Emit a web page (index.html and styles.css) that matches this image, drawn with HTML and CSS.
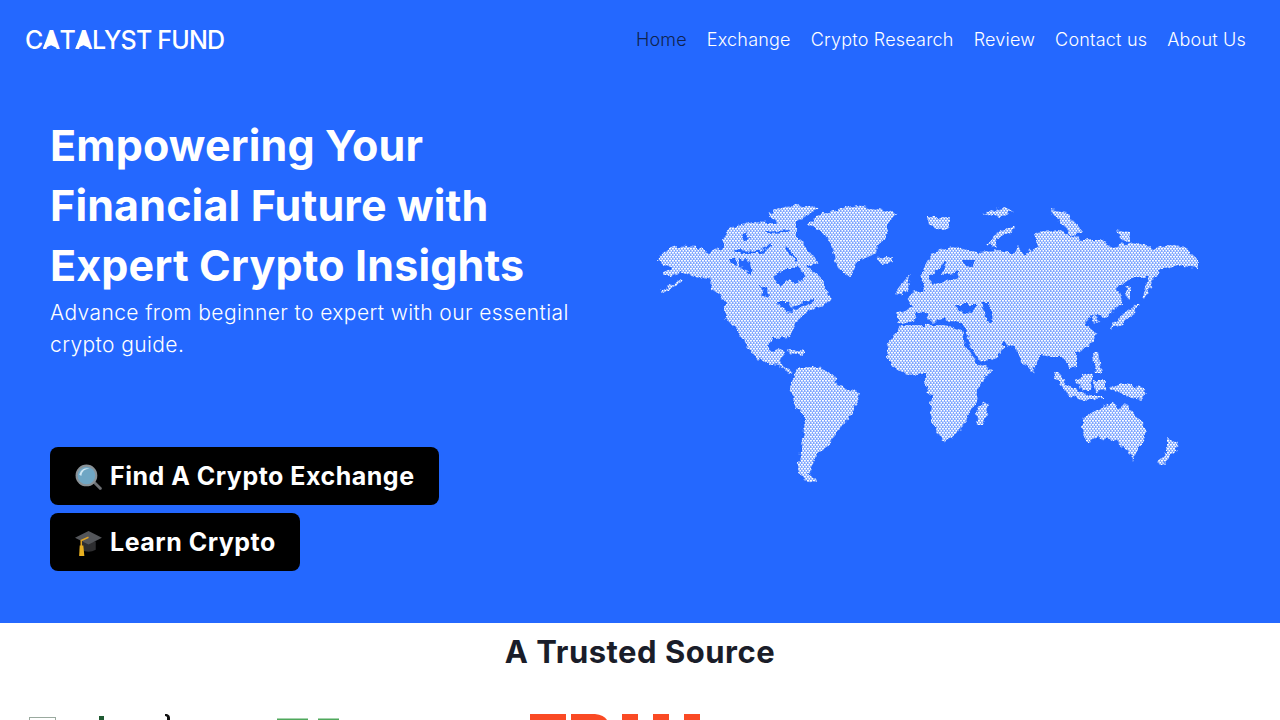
FILE: index.html
```html
<!DOCTYPE html>
<html lang="en">
<head>
    <meta charset="UTF-8">
    <title>Catalyst Fund</title>
    <link rel="stylesheet" href="styles.css">
</head>
<body>
<div class="hero">
    <div class="nav">
        <a href="#" class="logo">C<span class="tri">A</span>T<span class="tri">A</span>LYST FUND</a>
        <ul class="menu">
            <li><a href="#" class="active">Home</a></li>
            <li><a href="#">Exchange</a></li>
            <li><a href="#">Crypto Research</a></li>
            <li><a href="#">Review</a></li>
            <li><a href="#">Contact us</a></li>
            <li><a href="#">About Us</a></li>
        </ul>
    </div>
    <div class="hero-body">
        <div class="hero-left">
            <h1>Empowering Your<br>Financial Future with<br>Expert Crypto Insights</h1>
            <p>Advance from beginner to expert with our essential crypto guide.</p>
            <div class="btns">
                <a href="#" class="btn">
                    <svg class="emoji" viewBox="0 0 28 28">
                        <path d="M18 20l2-2 7 7q0 2-2 2z" fill="#6d6f73"/>
                        <circle cx="12" cy="13" r="10.500" fill="#8a9297"/>
                        <circle cx="12" cy="13" r="8.500" fill="#6fa6c4"/>
                        <path d="M5 12a7.500 7.500 0 0 1 10-5.500q-7 0-8 7z" fill="#cfe6f2"/>
                    </svg>
                    Find A Crypto Exchange
                </a>
                <a href="#" class="btn">
                    <svg class="emoji" viewBox="0 0 28 28">
                        <path d="M7 13v8q7 4 14 0v-8z" fill="#2e2e30"/>
                        <path d="M14 3L27 9.500 14 16 1 9.500z" fill="#54565a"/>
                        <path d="M14 9L7 12v7" fill="none" stroke="#e0a526" stroke-width="1.500"/>
                        <path d="M5.500 17h3.500l1 10H5z" fill="#e8b020"/>
                    </svg>
                    Learn Crypto
                </a>
            </div>
        </div>
        <div class="hero-right">
            <svg class="map" viewBox="640 190 570 300">
                <defs>
                    <pattern id="dots" width="3" height="4" patternUnits="userSpaceOnUse">
                        <rect width="3" height="4" fill="#7ea6ff"/>
                        <rect x="0" y="0" width="1.900" height="1.500" fill="#fff"/>
                        <rect x="1.500" y="2" width="1.900" height="1.500" fill="#fff"/>
                    </pattern>
                    <!-- roughens the coastlines so they break up like the dots do -->
                    <filter id="rough" x="-5%" y="-5%" width="110%" height="110%">
                        <feTurbulence type="fractalNoise" baseFrequency="0.16" numOctaves="2" seed="4"/>
                        <feDisplacementMap in="SourceGraphic" scale="7" xChannelSelector="R" yChannelSelector="G"/>
                    </filter>
                    <mask id="land" maskUnits="userSpaceOnUse" x="640" y="190" width="570" height="300">
                        <g fill="#fff" fill-rule="evenodd" filter="url(#rough)">
                            <!-- north america -->
                            <path d="M662 276L672 268 658 262 663 252 677 246 698 248 708 252 723 248 723 240 730 228 753 222 767 223 777 223 768 213 793 205 818 207 807 216 797 222 797 237 803 243 818 263 807 268 813 272 817 273 825 287 832 300 827 303 807 312 795 323 790 337 773 338 767 347 773 352 778 348 787 352 783 358 780 363 792 372 798 367 790 374 780 366 772 365 757 358 747 347 737 330 725 318 725 303 718 293 712 290 710 280 700 277 690 275 680 272 670 276z
                            M773 277L787 268 800 268 806 277 796 283 788 280 780 287z
                            M760 287L767 288 768 297 763 295z
                            M777 302L790 302 793 313 785 312 782 307z
                            M792 307L813 299 813 302 795 311z
                            M728 258L736 258 737 265 731 263z
                            M740 258L750 262 753 277 745 270 740 268z
                            M733 250L760 251 772 243 772 245 762 253 735 253z
                            M745 232L750 238 747 241 742 238z
                            M765 232L790 230 788 233 768 234z
                            M787 246L797 258 795 260 785 249z"/>
                            <path d="M660 291L680 279 684 281 662 293z"/>
                            <path d="M787 349L804 352 804 355 790 353z"/>
                            <path d="M807 225L817 215 857 205 873 208 897 213 887 223 888 233 877 247 875 253 857 263 850 277 840 270 835 260 832 245 820 230z"/>
                            <path d="M878 258L893 256 893 262 882 266z"/>
                            <!-- arctic islands -->
                            <path d="M927 217L950 217 948 228 940 230 928 225z"/>
                            <path d="M983 213L1003 208 1013 211 1000 218z"/>
                            <path d="M987 245L997 232 1015 227 1015 230 1000 237 995 247z"/>
                            <path d="M1050 210L1067 213 1083 232 1073 235 1060 223z"/>
                            <path d="M1115 230L1130 233 1128 243 1122 238z"/>
                            <!-- europe and asia -->
                            <path d="M920 275L933 252 953 247 977 252 997 250 1012 254 1018 246 1025 256 1030 250 1037 247 1035 233 1060 230 1083 240 1100 240 1113 247 1133 242 1153 248 1183 245 1198 260 1198 268 1177 265 1160 270 1152 282 1145 300 1143 298 1146 282 1150 277 1133 277 1117 287 1123 303 1113 310 1107 318 1090 313 1085 327 1097 333 1092 343 1077 353 1077 367 1070 368 1062 357 1052 357 1040 355 1033 373 1023 363 1015 347 1003 342 1003 348 997 358 982 362 972 350 967 335 963 323 950 322 943 318 933 323 928 318 927 312 917 313 913 323 898 322 898 312 913 307 907 297 913 293 925 290z
                            M928 278L945 262 947 262 942 275 960 272 958 277 935 285z
                            M963 260L975 260 972 266 965 265z
                            M955 305L977 305 972 313 958 311z
                            M982 303L990 303 993 322 987 320z
                            M1090 316L1096 315 1100 322 1094 324z"/>
                            <path d="M895 292L905 280 910 274 908 288 903 296z"/>
                            <path d="M1125 285L1130 287 1130 301 1127 300z"/>
                            <path d="M1113 323L1138 303 1140 305 1122 325 1110 330z"/>
                            <!-- africa -->
                            <path d="M887 357L888 343 897 332 900 325 943 325 952 327 962 330 965 345 978 365 992 370 983 380 978 390 977 402 967 417 962 430 943 442 937 433 930 413 932 397 925 387 925 373 907 375 895 368z"/>
                            <path d="M983 402L989 405 983 425 977 425 975 415z"/>
                            <!-- south america -->
                            <path d="M790 387L798 367 817 367 833 375 838 385 860 393 852 415 840 428 828 447 817 453 808 473 817 482 803 480 798 470 803 440 805 417 795 405z"/>
                            <!-- oceania and islands -->
                            <path d="M1083 418L1100 408 1113 403 1120 408 1125 403 1132 410 1145 427 1145 437 1133 460 1130 452 1117 442 1100 437 1085 443 1083 430z"/>
                            <path d="M1158 463L1167 452 1167 438 1178 443 1175 452 1162 465z"/>
                            <path d="M1075 380L1092 372 1090 390 1082 390z"/>
                            <path d="M1053 373L1058 373 1072 388 1090 396 1103 396 1103 398 1083 401 1067 394z"/>
                            <path d="M1093 380L1105 380 1105 390 1095 392z"/>
                            <path d="M1110 387L1120 383 1143 388 1147 393 1140 400 1123 395z"/>
                            <path d="M1093 353L1098 353 1102 373 1095 373z"/>
                        </g>
                    </mask>
                </defs>
                <rect x="640" y="190" width="570" height="300" fill="url(#dots)" mask="url(#land)"/>
            </svg>
        </div>
    </div>
</div>
<div class="trusted">
    <h2>A Trusted Source</h2>
    <div class="logos">
        <svg class="logo-a" viewBox="0 0 141 6">
            <rect x="0.500" y="3.500" width="26" height="10" fill="#fff" stroke="#9aaa9f"/>
            <rect x="70" y="2" width="5" height="6" fill="#1f5a32"/>
            <path d="M136 0h2q3 1 3 4v2h-3V3q-1-1-2-1z" fill="#111"/>
        </svg>
        <svg class="logo-b" viewBox="0 0 62 6">
            <rect x="0" y="4.500" width="31" height="1.500" fill="#4fa85c"/>
            <rect x="41" y="4.500" width="21" height="1.500" fill="#4fa85c"/>
        </svg>
        <svg class="logo-c" viewBox="0 0 171 6">
            <rect x="0" y="0" width="36" height="6" fill="#fa4a24"/>
            <path d="M41 0h24q9 1 12 6H41z" fill="#fa4a24"/>
            <rect x="92" y="0" width="16" height="6" fill="#fa4a24"/>
            <rect x="123" y="0" width="16" height="6" fill="#fa4a24"/>
            <rect x="154" y="0" width="16" height="6" fill="#fa4a24"/>
        </svg>
    </div>
</div>
</body>
</html>
```

FILE: styles.css
```css
* {
    margin: 0;
    padding: 0;
    box-sizing: border-box;
}

html, body {
    height: 720px;
    overflow: hidden;
}

body {
    font-family: "Inter", "Liberation Sans", sans-serif;
    background: #fff;
    color: #1a1d29;
}

a {
    text-decoration: none;
}

li {
    list-style-type: none;
}

.hero {
    background: #2468ff;
    height: 623px;
    color: #fff;
}

.nav {
    height: 78px;
    display: flex;
    justify-content: space-between;
    align-items: center;
    padding: 0 34px 0 25px;
}

.logo {
    margin-top: 2px;
    color: #fff;
    font-size: 25px;
    font-weight: 500;
    letter-spacing: -0.8px;
    white-space: pre;
}

/* A in the logo is a solid triangle, no crossbar */
.tri {
    position: relative;
    display: inline-block;
}

.tri::after {
    content: "";
    position: absolute;
    left: 0;
    right: 0;
    top: 5px;
    bottom: 6px;
    background: #fff;
    clip-path: polygon(50% 0, 100% 100%, 50% 80%, 0 100%);
}

.menu {
    display: flex;
    gap: 20px;
}

.menu a {
    color: #fff;
    font-size: 18px;
    font-weight: 300;
    letter-spacing: 0.2px;
}

.menu a.active {
    color: #0f2350;
}

.hero-body {
    display: flex;
    padding-top: 37px;
}

.hero-left {
    width: 640px;
    padding-left: 50px;
}

.hero-right {
    padding-top: 75px;
}

.map {
    display: block;
    width: 570px;
    height: 300px;
}

h1 {
    margin-bottom: 2px;
    font-size: 43px;
    font-weight: 700;
    line-height: 60px;
    letter-spacing: 0.15px;
}

.hero-left p {
    width: 530px;
    font-size: 21px;
    font-weight: 300;
    line-height: 32px;
    letter-spacing: 0.4px;
}

.btns {
    margin-top: 86px;
    display: flex;
    flex-direction: column;
    align-items: flex-start;
    gap: 8px;
}

.btn {
    height: 58px;
    display: flex;
    align-items: center;
    gap: 7px;
    padding: 0 24px;
    background: #000;
    border-radius: 8px;
    color: #fff;
    font-size: 25px;
    font-weight: 700;
    letter-spacing: 0.5px;
}

.emoji {
    width: 29px;
    height: 29px;
}

.trusted h2 {
    height: 58px;
    font-size: 31px;
    font-weight: 700;
    line-height: 58px;
    letter-spacing: 0.5px;
    text-align: center;
}

.logos {
    display: flex;
    margin-top: 33px;
    padding-left: 29px;
}

.logos svg {
    display: block;
    height: 6px;
    overflow: hidden;
}

.logo-a {
    width: 141px;
}

.logo-b {
    width: 62px;
    margin-left: 107px;
}

.logo-c {
    width: 171px;
    margin-left: 191px;
}
```
